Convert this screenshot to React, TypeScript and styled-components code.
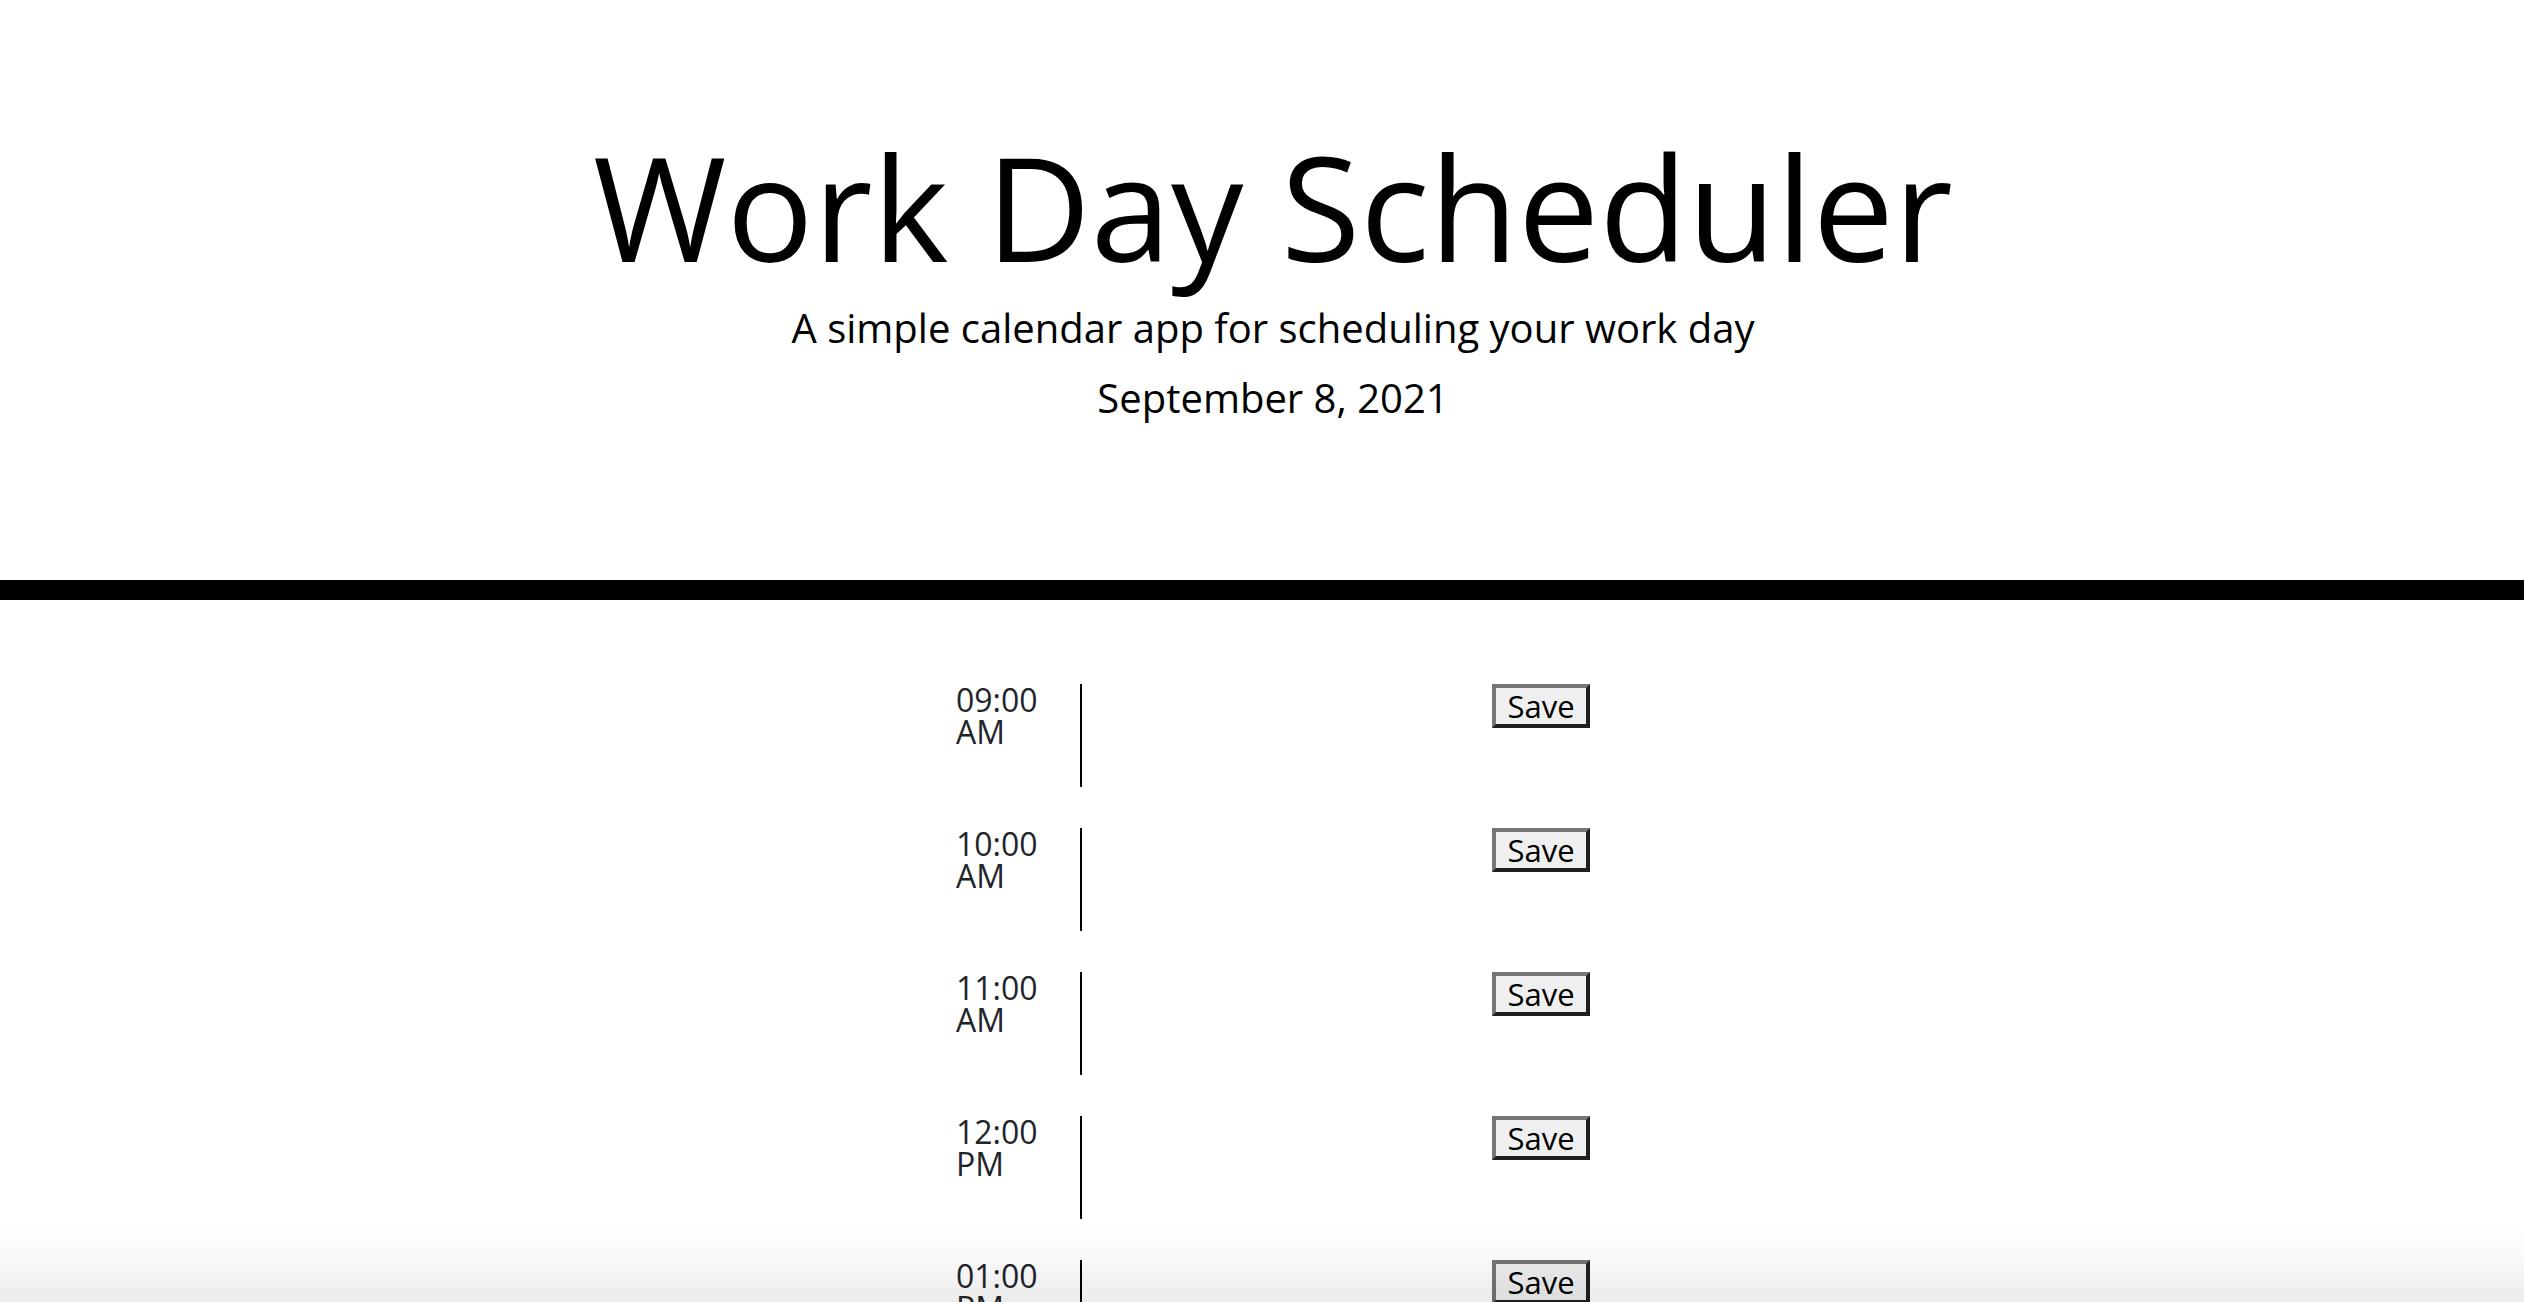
import React from "react";
import styled, { createGlobalStyle } from "styled-components";

const GlobalStyle = createGlobalStyle`
  html, body {
    margin: 0;
    padding: 0;
    background: #ffffff;
    font-family: "Open Sans", "Noto Sans", sans-serif;
  }
  *, *::before, *::after { box-sizing: border-box; }
`;

const Page = styled.div`
  padding-left: 22px;
`;

const Header = styled.header`
  text-align: center;
  padding: 120px 0 152px;
  margin-left: -22px;
  padding-left: 22px;
  border-bottom: 20px solid #000000;
  color: #000000;
`;

const Title = styled.h1`
  margin: 0;
  font-size: 144.5px;
  font-weight: 400;
  line-height: 1.2;
`;

const Lead = styled.p<{ $gap: number }>`
  margin: ${(p) => p.$gap}px 0 0;
  font-size: 40px;
  font-weight: 400;
  line-height: 1.5;
`;

const Planner = styled.main`
  width: 634px;
  margin: 0 auto;
  padding-top: 84px;
  display: flex;
  flex-direction: column;
  gap: 41px;
`;

const TimeBlock = styled.div`
  display: flex;
  align-items: flex-start;
`;

const Hour = styled.div`
  width: 124px;
  flex: none;
  font-size: 32px;
  line-height: 32px;
  color: #212529;
`;

const Description = styled.textarea`
  width: 412px;
  height: 103px;
  flex: none;
  border: none;
  border-left: 2px solid #000000;
  resize: none;
  background: transparent;
  font-family: inherit;
  font-size: 28px;
  outline: none;
  padding: 4px;
`;

const SaveButton = styled.button`
  width: 98px;
  height: 44px;
  flex: none;
  padding: 0;
  background: #efefef;
  border-style: solid;
  border-width: 4px;
  border-color: #767676 #1f1f1f #1f1f1f #767676;
  font-family: "Open Sans", "Noto Sans", sans-serif;
  font-size: 31px;
  line-height: 34px;
  color: #000000;
  cursor: pointer;
`;

const BottomShade = styled.div`
  position: fixed;
  left: 0;
  right: 0;
  bottom: 0;
  height: 76px;
  pointer-events: none;
  background: linear-gradient(
    to bottom,
    rgba(0, 0, 0, 0) 0%,
    rgba(0, 0, 0, 0.03) 50%,
    rgba(0, 0, 0, 0.08) 100%
  );
`;

const hours = ["09:00 AM", "10:00 AM", "11:00 AM", "12:00 PM", "01:00 PM", "02:00 PM", "03:00 PM", "04:00 PM", "05:00 PM"];

export default function App() {
  return (
    <Page>
      <GlobalStyle />
      <Header>
        <Title>Work Day Scheduler</Title>
        <Lead $gap={5}>A simple calendar app for scheduling your work day</Lead>
        <Lead $gap={10}>September 8, 2021</Lead>
      </Header>
      <Planner>
        {hours.map((h) => (
          <TimeBlock key={h}>
            <Hour>{h}</Hour>
            <Description />
            <SaveButton>Save</SaveButton>
          </TimeBlock>
        ))}
      </Planner>
      <BottomShade />
    </Page>
  );
}
